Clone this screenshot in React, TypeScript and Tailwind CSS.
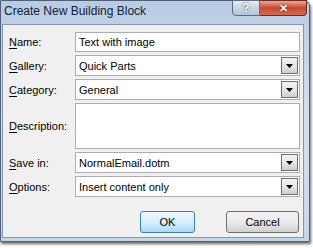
import React from 'react';

const font = { fontFamily: '"Liberation Sans", Arial, sans-serif' };

function Label({ k, rest }: { k: string; rest: string }) {
  return (
    <div className="w-[72px] pl-[6px] text-[11px] leading-[14px] text-black">
      <span className="underline underline-offset-[2px]">{k}</span>
      {rest}
    </div>
  );
}

function Arrow() {
  return (
    <div className="mr-px flex h-[calc(100%-2px)] w-[17px] items-center justify-center border border-[#707070] bg-gradient-to-b from-[#f3f3f3] via-[#e6e6e6] to-[#cdcdcd]">
      <svg width="7" height="4" viewBox="0 0 7 4">
        <path d="M0 0h7L3.5 4z" fill="#000" />
      </svg>
    </div>
  );
}

function Row({ k, rest, value, drop, h }: { k: string; rest: string; value: string; drop?: boolean; h: string }) {
  return (
    <div className="flex items-center">
      <Label k={k} rest={rest} />
      <div className={`flex flex-1 items-center border border-[#abadb3] bg-white ${h}`}>
        <span className="flex-1 pl-[3px] text-[11px] leading-[14px] text-black">{value}</span>
        {drop && <Arrow />}
      </div>
    </div>
  );
}

export default function App() {
  return (
    <div className="h-[248px] w-[313px] overflow-hidden bg-white" style={font}>
      <div className="relative h-[242px] w-[310px] rounded-tr-[6px] border border-[#4f6078] bg-gradient-to-b from-[#b8cce4] via-[#d3e0ee] to-[#c6d6e9] pb-[3px] pl-px pr-[5px] shadow-[1px_2px_3px_rgba(0,0,0,0.6)]">
        {/* title bar */}
        <div className="flex h-[23px] items-center pb-[3px] pl-[2px]">
          <span className="text-[12px] leading-[14px] text-[#0f1d33]">Create New Building Block</span>
        </div>
        <div className="absolute right-[2px] top-[-1px] flex h-[16px]">
          <div className="flex w-[28px] items-center justify-center rounded-bl-[4px] border border-[#5d6c82] bg-gradient-to-b from-[#e6eef7] via-[#c8d5e5] to-[#b3c4da] text-[12px] font-bold leading-none text-white [text-shadow:0_0_2px_#333]">
            ?
          </div>
          <div className="flex w-[47px] items-center justify-center rounded-br-[4px] border border-l-0 border-[#6b2a22] bg-gradient-to-b from-[#e9a797] via-[#c7492f] to-[#d66a4f] text-[11px] font-bold leading-none text-white [text-shadow:0_0_2px_#400]">
            ✕
          </div>
        </div>
        {/* client */}
        <div className="flex h-[214px] flex-col border border-[#8496ad] bg-[#f0f0f0] pr-[3px] pt-[7px]">
          <div className="flex flex-col gap-[3px]">
            <Row k="N" rest="ame:" value="Text with image" h="h-[20px]" />
            <Row k="G" rest="allery:" value="Quick Parts" drop h="h-[21px]" />
            <Row k="C" rest="ategory:" value="General" drop h="h-[21px]" />
            <div className="flex items-center">
              <Label k="D" rest="escription:" />
              <div className="h-[46px] flex-1 border border-[#abadb3] bg-white" />
            </div>
            <Row k="S" rest="ave in:" value="NormalEmail.dotm" drop h="h-[21px]" />
            <Row k="O" rest="ptions:" value="Insert content only" drop h="h-[21px]" />
          </div>
          <div className="mt-[14px] flex justify-end gap-[31px] pr-px">
            <button className="h-[22px] w-[55px] rounded-[3px] border border-[#3c7fb1] bg-gradient-to-b from-[#eaf6fd] via-[#d9f0fc] to-[#a9daf5] text-[11px] text-black">
              OK
            </button>
            <button className="h-[22px] w-[73px] rounded-[3px] border border-[#707070] bg-gradient-to-b from-[#f2f2f2] via-[#ebebeb] to-[#d0d0d0] text-[11px] text-black">
              Cancel
            </button>
          </div>
        </div>
      </div>
    </div>
  );
}
